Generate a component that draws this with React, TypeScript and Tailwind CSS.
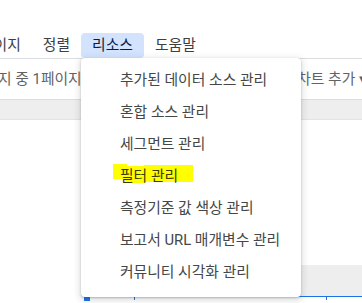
import React from 'react';

const menuBarItems = ['페이지', '정렬', '리소스', '도움말'];

const resourceItems = [
  '추가된 데이터 소스 관리',
  '혼합 소스 관리',
  '세그먼트 관리',
  '필터 관리',
  '측정기준 값 색상 관리',
  '보고서 URL 매개변수 관리',
  '커뮤니티 시각화 관리',
];

const App: React.FC = () => {
  const font = "font-['Roboto','Noto_Sans_CJK_KR',sans-serif]";

  return (
    <div className={`relative w-[362px] h-[303px] overflow-hidden bg-white text-[14.8px] ${font}`}>
      {/* top spacer */}
      <div className="h-8" />

      {/* menu bar */}
      <div className="flex h-[26px] items-center ml-[-31px] text-[#3c4043]">
        {menuBarItems.map(item => (
          <div
            key={item}
            className={
              item === '리소스'
                ? 'flex h-[25px] items-center px-[11px] rounded-[4px] bg-[#d3e3fd] text-[#041e49]'
                : 'flex h-[25px] items-center px-[11px]'
            }
          >
            {item}
          </div>
        ))}
      </div>

      {/* toolbar */}
      <div className="flex h-[42px] items-center justify-between border-y border-[#dadce0] text-[#5f6368]">
        <span className="ml-[-2px] whitespace-nowrap">지 중 1페이지</span>
        <span className="mr-[-5px] whitespace-nowrap">차트 추가 ▾</span>
      </div>

      {/* grey band */}
      <div className="h-5 bg-[#eeeeee] border-b border-[#e3e3e3]" />

      {/* canvas */}
      <div className="h-[145px]" />
      <div className="flex h-[31px]">
        <div className="w-[81px]" />
        <div className="flex-1 bg-[#eeeeee]" />
      </div>
      <div className="relative ml-[84px] h-px bg-[#1a73e8]">
        <div className="absolute left-0 top-0 w-[6px] h-[5px] bg-[#1a73e8]" />
        <div className="absolute left-[50px] top-0 w-px h-[4px] bg-[#1a73e8]" />
        <div className="absolute left-[242px] top-0 w-px h-[4px] bg-[#1a73e8]" />
      </div>

      {/* resources dropdown */}
      <div className="absolute left-[81px] top-[58px] w-[220px] h-[239px] rounded-[4px] bg-white pt-[6px] shadow-[0_2px_6px_2px_rgba(60,64,67,0.15),0_1px_2px_rgba(60,64,67,0.3)]">
        {resourceItems.map(item => (
          <div key={item} className="flex h-8 items-center pl-[39px] text-[#444746] whitespace-nowrap">
            {item === '필터 관리' ? (
              <span className="relative">
                <span className="absolute left-[-7px] top-[-1px] w-[14px] h-[15px] bg-[#ffff00]" />
                <span className="absolute left-[5px] top-[1px] w-[20px] h-[17px] bg-[#ffff00]" />
                <span className="absolute left-[24px] top-[0px] w-[49px] h-[17px] bg-[#ffff00]" />
                <span className="relative text-[#3c3c00]">{item}</span>
              </span>
            ) : (
              item
            )}
          </div>
        ))}
      </div>
    </div>
  );
};

export default App;
